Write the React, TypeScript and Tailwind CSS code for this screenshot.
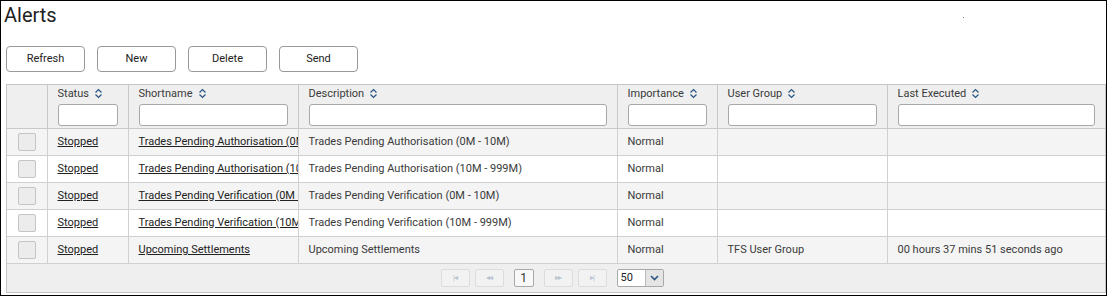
import React from "react";

const font = { fontFamily: "Roboto, 'Liberation Sans', sans-serif" };

const rows = [
  { short: "Trades Pending Authorisation (0M - 10M)", desc: "Trades Pending Authorisation (0M - 10M)", group: "", last: "" },
  { short: "Trades Pending Authorisation (10M - 999M)", desc: "Trades Pending Authorisation (10M - 999M)", group: "", last: "" },
  { short: "Trades Pending Verification (0M - 10M)", desc: "Trades Pending Verification (0M - 10M)", group: "", last: "" },
  { short: "Trades Pending Verification (10M - 999M)", desc: "Trades Pending Verification (10M - 999M)", group: "", last: "" },
  { short: "Upcoming Settlements", desc: "Upcoming Settlements", group: "TFS User Group", last: "00 hours 37 mins 51 seconds ago" },
];

const columns = [
  { label: "Status", width: "w-[81px]" },
  { label: "Shortname", width: "w-[170px]" },
  { label: "Description", width: "w-[319px]" },
  { label: "Importance", width: "w-[100px]" },
  { label: "User Group", width: "w-[170px]" },
  { label: "Last Executed", width: "" },
];

function SortIcon() {
  return (
    <svg width="9" height="11" viewBox="0 0 9 11" className="inline-block ml-[5px] -mt-[2px]">
      <path d="M1.5 4.5 L4.5 1.5 L7.5 4.5" fill="none" stroke="#2a5580" strokeWidth="1.2" />
      <path d="M1.5 6.5 L4.5 9.5 L7.5 6.5" fill="none" stroke="#2a5580" strokeWidth="1.2" />
    </svg>
  );
}

function PagerButton({ children }: { children: React.ReactNode }) {
  return (
    <div className="w-[29px] h-[18px] border border-[#dcdcdc] rounded-[2px] bg-[#f2f2f2] flex items-center justify-center text-[8px] text-[#b8c4d0] tracking-[-1px]">
      {children}
    </div>
  );
}

function Cell({ children, last }: { children?: React.ReactNode; last?: boolean }) {
  return (
    <td className={`${last ? "" : "border-r"} border-b border-[#d0d0d0] p-0`}>
      <div className="overflow-hidden whitespace-nowrap pl-[10px]">{children}</div>
    </td>
  );
}

export default function App() {
  return (
    <div style={font} className="w-[1107px] h-[296px] border border-black bg-white relative text-[#3a3a3a]">
      <h1 className="text-[20px] leading-[26px] pl-[3px] pt-[1px] text-[#222]">Alerts</h1>
      <div className="absolute left-[962px] top-[16px] w-[1px] h-[1px] bg-[#777]" />

      <div className="flex gap-[12px] pl-[5px] mt-[18px]">
        {["Refresh", "New", "Delete", "Send"].map((b) => (
          <button
            key={b}
            className="w-[79px] h-[26px] border border-[#999] rounded-[4px] bg-white text-[11px] text-[#222]"
          >
            {b}
          </button>
        ))}
      </div>

      <div className="ml-[5px] mt-[12px] w-[1100px] border border-[#c4c4c4]">
        <table className="w-full border-collapse table-fixed text-[11px]">
          <thead>
            <tr className="bg-[#efefef]">
              <th className="w-[40px] border-r border-b border-[#c8c8c8]" />
              {columns.map((c, i) => (
                <th
                  key={c.label}
                  className={`${c.width} ${i < columns.length - 1 ? "border-r" : ""} border-b border-[#c8c8c8] text-left font-normal px-[10px] pt-[2px] pb-[2px] align-top`}
                >
                  <div className="leading-[14px] h-[14px] text-[#3a3a3a] whitespace-nowrap">
                    {c.label}
                    <SortIcon />
                  </div>
                  <div className="mt-[3px] h-[22px] w-full border border-[#a8a8a8] rounded-[3px] bg-white" />
                </th>
              ))}
            </tr>
          </thead>
          <tbody>
            {rows.map((r, i) => (
              <tr key={i} className={i % 2 === 0 ? "bg-[#f4f4f4]" : "bg-white"}>
                <td className="h-[27px] border-r border-b border-[#d0d0d0]">
                  <div className="mx-auto w-[18px] h-[18px] border border-[#c4c4c4] rounded-[2px] bg-[#ececec]" />
                </td>
                <Cell>
                  <span className="underline text-[#222]">Stopped</span>
                </Cell>
                <Cell>
                  <span className="underline text-[#222]">{r.short}</span>
                </Cell>
                <Cell>{r.desc}</Cell>
                <Cell>Normal</Cell>
                <Cell>{r.group}</Cell>
                <Cell last>{r.last}</Cell>
              </tr>
            ))}
          </tbody>
        </table>
        <div className="h-[28px] bg-[#efefef] flex items-center justify-center gap-[5px] pr-[8px]">
          <PagerButton>|◂</PagerButton>
          <PagerButton>◂◂</PagerButton>
          <div className="mx-[5px] w-[20px] h-[18px] border border-[#a8a8a8] rounded-[2px] bg-[#f8f8f8] flex items-center justify-center text-[12px] text-[#333]">
            1
          </div>
          <PagerButton>▸▸</PagerButton>
          <PagerButton>▸|</PagerButton>
          <div className="ml-[5px] w-[47px] h-[18px] border border-[#a8a8a8] rounded-[2px] bg-white flex items-center text-[11px] text-[#222]">
            <span className="pl-[3px] flex-1">50</span>
            <div className="w-[18px] h-[16px] bg-[#e4e4e4] border-l border-[#bbb] flex items-center justify-center">
              <svg width="9" height="6" viewBox="0 0 9 6">
                <path d="M1 1 L4.5 4.5 L8 1" fill="none" stroke="#2a5580" strokeWidth="1.6" />
              </svg>
            </div>
          </div>
        </div>
      </div>
    </div>
  );
}
